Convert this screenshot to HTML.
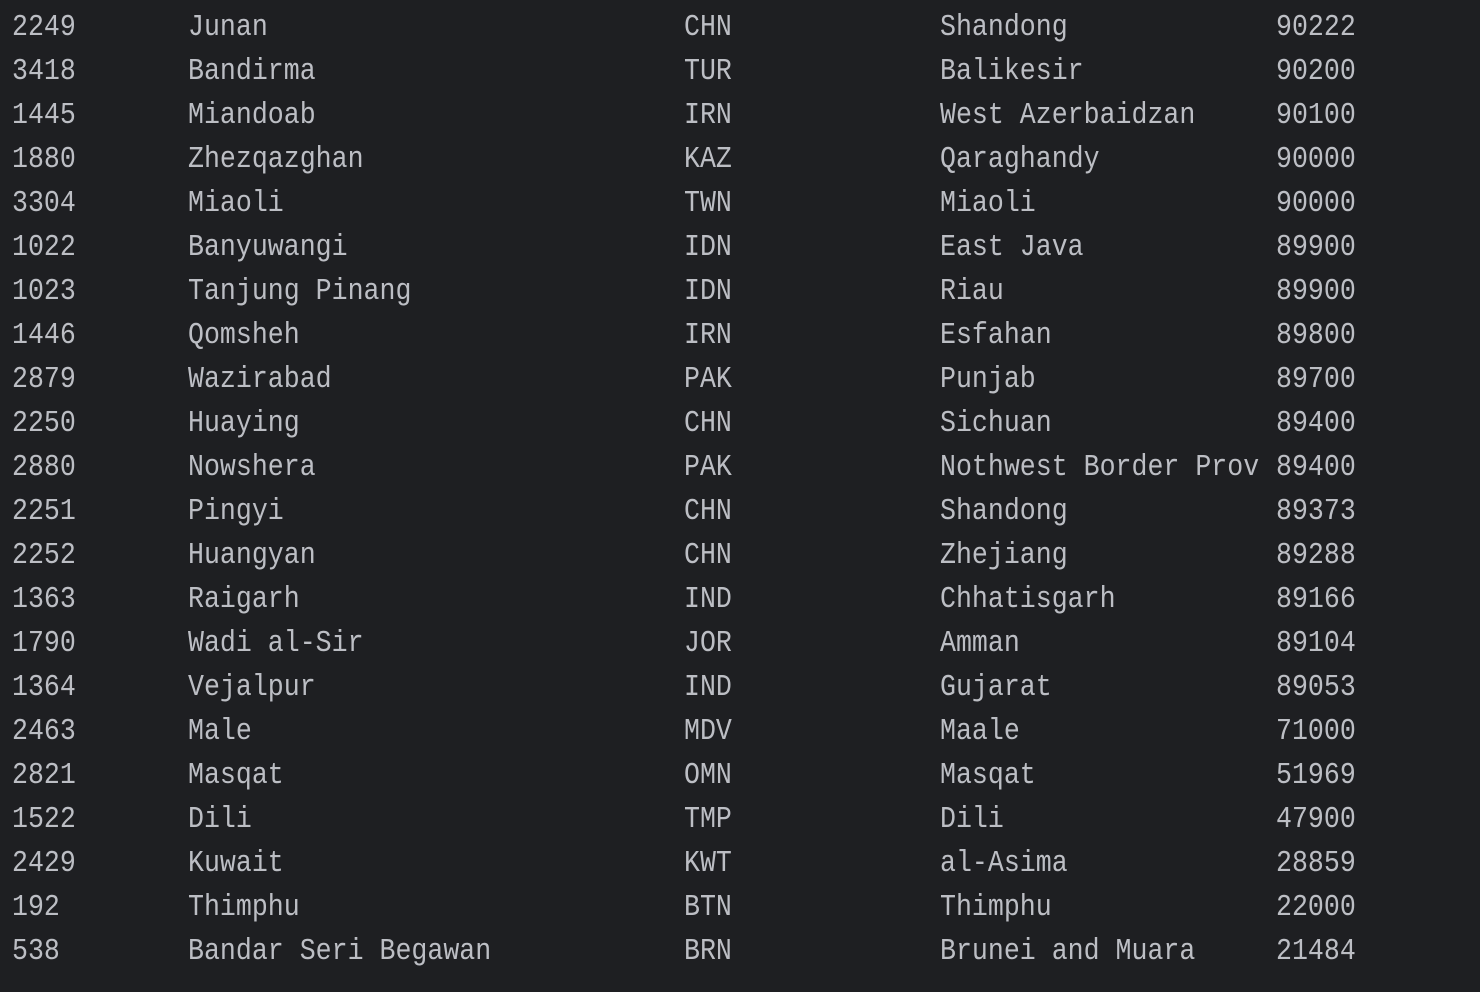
<!DOCTYPE html>
<html><head><style>
html,body{margin:0;padding:0;background:#1e1f22;width:1480px;height:992px;overflow:hidden}
.r{position:absolute;left:0;height:44px;line-height:44px;font-family:"Liberation Mono",monospace;font-size:26.6px;color:#bcbec4;white-space:pre;transform:scaleY(1.14);transform-origin:0 50%}
.r span{position:absolute;top:0}
.a{left:12px}.b{left:188px}.c{left:684px}.d{left:940px}.e{left:1276px}
</style></head><body>
<div id="t"></div>
<script>
const rows=[["2249","Junan","CHN","Shandong","90222"],["3418","Bandirma","TUR","Balikesir","90200"],["1445","Miandoab","IRN","West Azerbaidzan","90100"],["1880","Zhezqazghan","KAZ","Qaraghandy","90000"],["3304","Miaoli","TWN","Miaoli","90000"],["1022","Banyuwangi","IDN","East Java","89900"],["1023","Tanjung Pinang","IDN","Riau","89900"],["1446","Qomsheh","IRN","Esfahan","89800"],["2879","Wazirabad","PAK","Punjab","89700"],["2250","Huaying","CHN","Sichuan","89400"],["2880","Nowshera","PAK","Nothwest Border Prov","89400"],["2251","Pingyi","CHN","Shandong","89373"],["2252","Huangyan","CHN","Zhejiang","89288"],["1363","Raigarh","IND","Chhatisgarh","89166"],["1790","Wadi al-Sir","JOR","Amman","89104"],["1364","Vejalpur","IND","Gujarat","89053"],["2463","Male","MDV","Maale","71000"],["2821","Masqat","OMN","Masqat","51969"],["1522","Dili","TMP","Dili","47900"],["2429","Kuwait","KWT","al-Asima","28859"],["192","Thimphu","BTN","Thimphu","22000"],["538","Bandar Seri Begawan","BRN","Brunei and Muara","21484"]];
let h="";rows.forEach((r,i)=>{h+=`<div class="r" style="top:${5+i*44}px"><span class="a">${r[0]}</span><span class="b">${r[1]}</span><span class="c">${r[2]}</span><span class="d">${r[3]}</span><span class="e">${r[4]}</span></div>`});
document.getElementById("t").innerHTML=h;
</script>
</body></html>
